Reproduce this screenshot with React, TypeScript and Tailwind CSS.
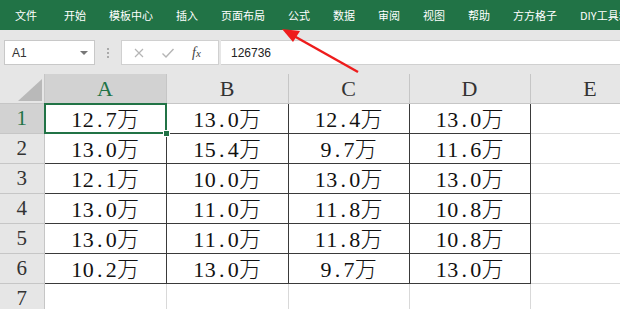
import React from "react";

const tabs = ["文件", "开始", "模板中心", "插入", "页面布局", "公式", "数据", "审阅", "视图", "帮助", "方方格子", "DIY工具箱"];

const columns = [
  { key: "A", width: 122 },
  { key: "B", width: 122 },
  { key: "C", width: 121 },
  { key: "D", width: 121 },
  { key: "E", width: 120 },
];

const data: string[][] = [
  ["12.7万", "13.0万", "12.4万", "13.0万"],
  ["13.0万", "15.4万", "9.7万", "11.6万"],
  ["12.1万", "10.0万", "13.0万", "13.0万"],
  ["13.0万", "11.0万", "11.8万", "10.8万"],
  ["13.0万", "11.0万", "11.8万", "10.8万"],
  ["10.2万", "13.0万", "9.7万", "13.0万"],
];

const serif = { fontFamily: '"Liberation Serif", "Noto Sans CJK SC", serif' };

// SimSun style: half-width characters take a fixed half-em cell
const CellText: React.FC<{ text: string }> = ({ text }) => (
  <span className="inline-flex items-baseline text-[22px] leading-none text-[#111]">
    {text.split("").map((ch, i) =>
      ch === "万" ? (
        <span key={i} className="inline-block w-[22px] text-center" style={{ fontFamily: '"Noto Sans CJK SC", sans-serif', fontWeight: 300 }}>
          {ch}
        </span>
      ) : (
        <span key={i} className="inline-block w-[11.5px] text-center" style={serif}>
          {ch}
        </span>
      )
    )}
  </span>
);

const App: React.FC = () => {
  return (
    <div className="relative w-[620px] h-[309px] overflow-hidden bg-white" style={{ fontFamily: '"Noto Sans CJK SC", "Liberation Sans", sans-serif' }}>
      {/* ribbon tabs */}
      <div className="h-[30px] bg-[#217346] flex items-center pl-[15px] gap-[23px] text-white text-[11px] whitespace-nowrap">
        {tabs.map((t, i) => (
          <span key={t} className={i === 0 ? "mr-[4px]" : ""}>
            {t}
          </span>
        ))}
      </div>

      {/* formula bar */}
      <div className="h-[44px] bg-[#e6e6e6] flex items-start pt-[10px] pl-[4px]">
        <div className="w-[91px] h-[25px] bg-white border border-[#c8c8c8] flex items-center justify-between pl-[7px] pr-[6px]">
          <span className="text-[12px] text-[#333]" style={{ fontFamily: '"Liberation Sans", sans-serif' }}>A1</span>
          <span className="w-0 h-0 border-l-[4px] border-r-[4px] border-t-[4px] border-l-transparent border-r-transparent border-t-[#777]" />
        </div>
        <div className="w-[26px] h-[25px] flex flex-col items-center justify-center gap-[2px]">
          <span className="w-[2px] h-[2px] bg-[#aaa]" />
          <span className="w-[2px] h-[2px] bg-[#aaa]" />
          <span className="w-[2px] h-[2px] bg-[#aaa]" />
        </div>
        <div className="w-[98px] h-[25px] bg-white border border-[#d0d0d0] flex items-center pl-[11px] gap-[16px]">
          <svg width="12" height="12" viewBox="0 0 12 12">
            <path d="M2 2 L10 10 M10 2 L2 10" stroke="#b5b5b5" strokeWidth="1.2" />
          </svg>
          <svg width="14" height="12" viewBox="0 0 14 12">
            <path d="M1.5 6.5 L5 10 L12.5 2" stroke="#b5b5b5" strokeWidth="1.4" fill="none" />
          </svg>
          <span className="text-[14px] italic text-[#444] ml-[1px]" style={{ fontFamily: '"Liberation Serif", serif' }}>
            f<span className="text-[11px]">x</span>
          </span>
        </div>
        <div className="ml-[2px] flex-1 h-[25px] bg-white border-y border-[#d0d0d0] flex items-center pl-[10px]">
          <span className="text-[12px] text-[#222]" style={{ fontFamily: '"Liberation Sans", sans-serif' }}>126736</span>
        </div>
      </div>

      {/* sheet grid */}
      <table className="table-fixed border-collapse leading-none" style={{ width: 44 + 606 }}>
        <colgroup>
          <col style={{ width: 44 }} />
          {columns.map((c) => (
            <col key={c.key} style={{ width: c.width }} />
          ))}
        </colgroup>
        <thead>
          <tr>
            <th className="relative bg-[#e6e6e6] border border-[#c6c6c6] border-t-0 border-l-0 p-0">
              <div className="h-[29px]" />
              <svg className="absolute right-[2px] bottom-[2px]" width="24" height="22" viewBox="0 0 24 22">
                <polygon points="24,0 24,22 0,22" fill="#b9b9b9" />
              </svg>
            </th>
            {columns.map((c) => (
              <th
                key={c.key}
                className={`border border-[#c6c6c6] border-t-0 p-0 font-normal ${
                  c.key === "A" ? "bg-[#d2d2d2] text-[#217346]" : "bg-[#e6e6e6] text-[#333]"
                }`}
              >
                <div className="h-[29px] flex items-center justify-center text-[22px]" style={serif}>
                  {c.key}
                </div>
              </th>
            ))}
          </tr>
        </thead>
        <tbody>
          {[...data, ["", "", "", ""]].map((row, r) => (
            <tr key={r}>
              <td
                className={`border border-[#c6c6c6] border-l-0 p-0 ${
                  r === 0 ? "bg-[#d2d2d2] text-[#217346]" : "bg-[#e6e6e6] text-[#333]"
                }`}
              >
                <div className="h-[29px] flex items-center justify-center text-[21px]" style={serif}>
                  {r + 1}
                </div>
              </td>
              {row.map((v, c) => (
                <td
                  key={c}
                  className={`relative p-0 border ${r < 6 ? "border-[#3a3a3a]" : "border-[#d9d9d9]"}`}
                >
                  <div className="h-[29px] flex items-center justify-center">{v && <CellText text={v} />}</div>
                  {r === 0 && c === 0 && (
                    <>
                      <span className="absolute -left-[1px] -top-[1px] -right-[1px] -bottom-[1px] border-2 border-[#217346]" />
                      <span className="absolute -right-[4px] -bottom-[4px] w-[7px] h-[7px] bg-[#217346] border border-white" />
                    </>
                  )}
                </td>
              ))}
              <td className={`border border-[#d9d9d9] p-0 ${r < 6 ? "border-l-[#3a3a3a]" : ""}`}>
                <div className="h-[29px]" />
              </td>
            </tr>
          ))}
        </tbody>
      </table>

      {/* red annotation arrow */}
      <svg className="absolute left-0 top-0 pointer-events-none" width="620" height="309" viewBox="0 0 620 309">
        <line x1="358" y1="72" x2="294" y2="36" stroke="#ee1c1c" strokeWidth="2.5" />
        <polygon points="282,29 300,31 293,42" fill="#ee1c1c" />
      </svg>
    </div>
  );
};

export default App;
